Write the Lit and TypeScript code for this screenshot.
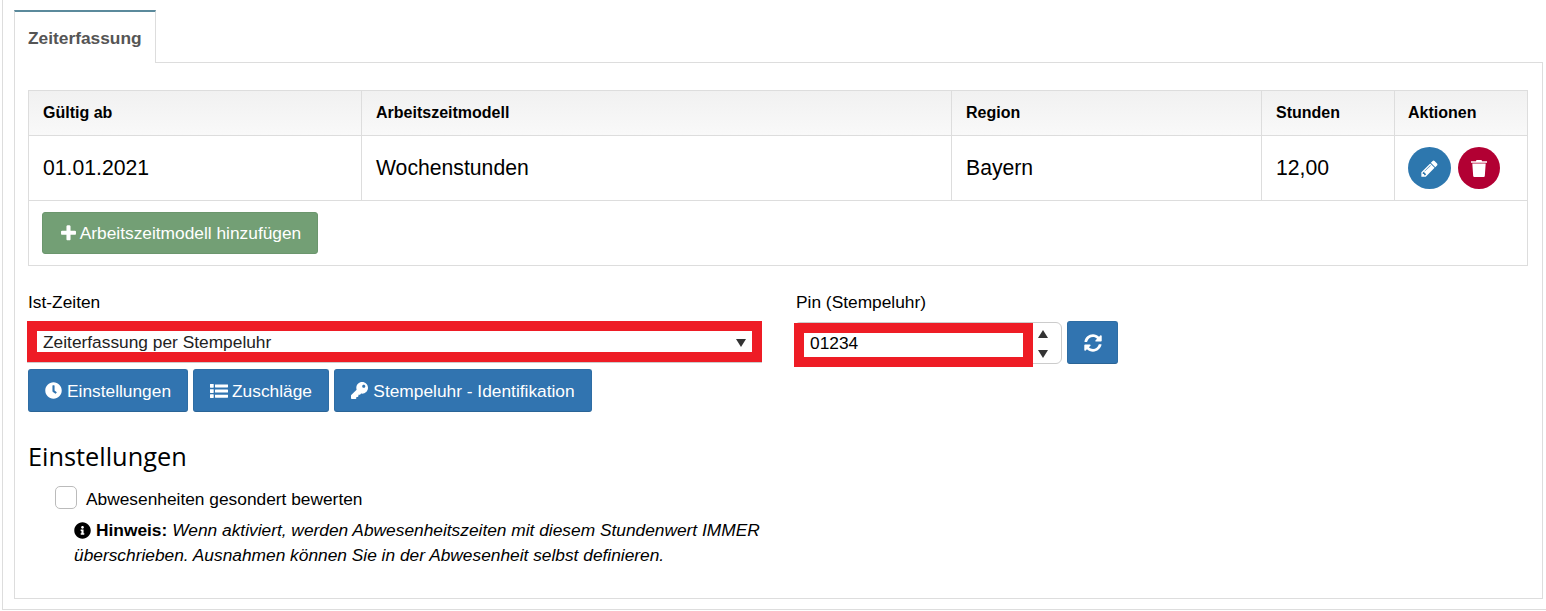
import { LitElement, html, css, svg } from "lit";
import { customElement } from "lit/decorators.js";

const icon = (vb: string, d: string) => html`<svg viewBox=${vb} fill="currentColor" aria-hidden="true">${svg`<path d=${d}></path>`}</svg>`;
const I = {
  pencil: icon("0 0 1792 1792", "M491 1536l91-91-235-235-91 91v107h128v128h107zm523-928q0-22-22-22-10 0-17 7l-542 542q-7 7-7 17 0 22 22 22 10 0 17-7l542-542q7-7 7-17zm-54-192l416 416-832 832h-416v-416zm683 96q0 53-37 90l-166 166-416-416 166-165q36-38 90-38 53 0 91 38l235 234q37 39 37 91z"),
  plus: icon("0 0 1792 1792", "M1600 736v192q0 40-28 68t-68 28h-416v416q0 40-28 68t-68 28h-192q-40 0-68-28t-28-68v-416h-416q-40 0-68-28t-28-68v-192q0-40 28-68t68-28h416v-416q0-40 28-68t68-28h192q40 0 68 28t28 68v416h416q40 0 68 28t28 68z"),
  clock: icon("0 0 512 512", "M256,8C119,8,8,119,8,256S119,504,256,504,504,393,504,256,393,8,256,8Zm92.49,313h0l-20,25a16,16,0,0,1-22.49,2.5h0l-67-49.72a40,40,0,0,1-15-31.23V112a16,16,0,0,1,16-16h32a16,16,0,0,1,16,16V256l58,42.5A16,16,0,0,1,348.49,321Z"),
  list: icon("0 0 18 14", "M.4 0h2.9c.2 0 .4.2.4.4v2.9c0 .2-.2.4-.4.4H.4C.2 3.7 0 3.5 0 3.3V.4C0 .2.2 0 .4 0zM5.4.4h12.2c.2 0 .4.2.4.4v2.2c0 .2-.2.4-.4.4H5.4c-.2 0-.4-.2-.4-.4V.8c0-.2.2-.4.4-.4zM.4 5.2h2.9c.2 0 .4.2.4.4v2.9c0 .2-.2.4-.4.4H.4C.2 8.9 0 8.7 0 8.5V5.6c0-.2.2-.4.4-.4zM5.4 5.6h12.2c.2 0 .4.2.4.4v2.2c0 .2-.2.4-.4.4H5.4c-.2 0-.4-.2-.4-.4V6c0-.2.2-.4.4-.4zM.4 10.3h2.9c.2 0 .4.2.4.4v2.9c0 .2-.2.4-.4.4H.4c-.2 0-.4-.2-.4-.4v-2.9c0-.2.2-.4.4-.4zM5.4 10.7h12.2c.2 0 .4.2.4.4v2.2c0 .2-.2.4-.4.4H5.4c-.2 0-.4-.2-.4-.4v-2.2c0-.2.2-.4.4-.4z"),
  key: icon("0 0 512 512", "M512 176.001C512 273.203 433.202 352 336 352c-11.22 0-22.19-1.062-32.827-3.069l-24.012 27.014A23.999 23.999 0 0 1 261.223 384H224v40c0 13.255-10.745 24-24 24h-40v40c0 13.255-10.745 24-24 24H24c-13.255 0-24-10.745-24-24v-78.059c0-6.365 2.529-12.47 7.029-16.971l161.802-161.802C163.108 213.814 160 195.271 160 176 160 78.798 238.797.001 335.999 0 433.488-.001 512 78.511 512 176.001zM336 128c0 26.51 21.49 48 48 48s48-21.49 48-48-21.49-48-48-48-48 21.49-48 48z"),
  sync: icon("0 0 512 512", "M370.72 133.28C339.458 104.008 298.888 87.962 255.848 88c-77.458.068-144.328 53.178-162.791 126.85-1.344 5.363-6.122 9.15-11.651 9.15H24.103c-7.498 0-13.194-6.807-11.807-14.176C33.933 94.924 134.813 8 256 8c66.448 0 126.791 26.136 171.315 68.685L463.03 40.97C478.149 25.851 504 36.559 504 57.941V192c0 13.255-10.745 24-24 24H345.941c-21.382 0-32.09-25.851-16.971-40.971l41.75-41.749zM32 296h134.059c21.382 0 32.09 25.851 16.971 40.971l-41.75 41.75c31.262 29.273 71.835 45.319 114.876 45.28 77.418-.07 144.315-53.144 162.787-126.849 1.344-5.363 6.122-9.15 11.651-9.15h57.304c7.498 0 13.194 6.807 11.807 14.176C478.067 417.076 377.187 504 256 504c-66.448 0-126.791-26.136-171.315-68.685L48.97 471.03C33.851 486.149 8 475.441 8 454.059V320c0-13.255 10.745-24 24-24z"),
  info: icon("0 0 512 512", "M256 8C119.043 8 8 119.083 8 256c0 136.997 111.043 248 248 248s248-111.003 248-248C504 119.083 392.957 8 256 8zm0 110c23.196 0 42 18.804 42 42s-18.804 42-42 42-42-18.804-42-42 18.804-42 42-42zm56 254c0 6.627-5.373 12-12 12h-88c-6.627 0-12-5.373-12-12v-24c0-6.627 5.373-12 12-12h12v-64h-12c-6.627 0-12-5.373-12-12v-24c0-6.627 5.373-12 12-12h64c6.627 0 12 5.373 12 12v100h12c6.627 0 12 5.373 12 12v24z"),
  trash: icon("0 0 16 17", "M5.5 0h5l.6 1.2H16v1.5H0V1.2h4.9zM1.3 3.6h13.4l-.9 12.4a1.1 1.1 0 0 1-1.1 1H3.3a1.1 1.1 0 0 1-1.1-1z"),
};

@customElement("app-root")
export class AppRoot extends LitElement {
  static styles = css`
    :host { display: block; width: 1546px; height: 611px; box-sizing: border-box; overflow: hidden; background: #fff;
      font-family: "Liberation Sans", Arial, sans-serif; color: #000; font-size: 17.33px; }
    * { box-sizing: border-box; }
    svg { display: block; }
    .outer { margin-left: 2px; height: 610px; border-left: 1px solid #ddd; border-bottom: 1px solid #ddd; padding: 10px 0 10px 11px; display: flex; flex-direction: column; }
    .tabs { display: flex; height: 53px; flex: none; margin-bottom: -1px; position: relative; z-index: 1; }
    .tab { width: 142px; height: 53px; border: 1px solid #ddd; border-top: 2px solid #5b8a9c; border-bottom: 0; background: #fff;
      font-size: 17.33px; font-weight: 700; color: #555; padding: 16px 0 0 13px; line-height: 20px; }
    .panel { width: 1529px; height: 537px; flex: none; border: 1px solid #ddd; padding: 27px 15px 0 13px; }
    .table { border: 1px solid #ddd; width: 1500px; }
    .row { display: grid; grid-template-columns: 332px 590px 310px 133px 1fr; }
    .cell { padding: 0 0 0 14px; border-left: 1px solid #ddd; display: flex; align-items: center; }
    .cell:first-child { border-left: 0; }
    .head { height: 45px; background: linear-gradient(#f1f1f1, #f9f9f9); border-bottom: 1px solid #ddd; font-size: 16px; font-weight: 700; }
    .head .cell:last-child { padding-left: 13px; }
    .body { height: 65px; border-bottom: 1px solid #ddd; font-size: 21.2px; }
    .foot { height: 64px; padding: 11px 13px; }
    .cell.actions { gap: 7px; padding-left: 13px; }
    .round { width: 43px; height: 42px; border-radius: 50%; background: #2d77ae; color: #fff; display: flex; align-items: center; justify-content: center; }
    .round svg { width: 19px; height: 19px; }
    .round.del { width: 42px; background: #b20033; }
    .round.del svg { width: 16px; height: 17px; }
    .btn { display: inline-flex; align-items: center; justify-content: center; gap: 5px; height: 43px; border-radius: 3px; color: #fff; background: #3174b0;
      border: 1px solid #2e6da4; border-bottom-color: #2a6496; font-size: 17.33px; white-space: nowrap; }
    .btn svg { width: 17px; height: 17px; flex: none; }
    .btn span { padding-top: 2px; }
    .btn.green { background: #739f75; border-color: #6b966d; height: 42px; width: 276px; gap: 2px; }
    .btn.green svg { width: 19px; height: 19px; }
    .btn.green span { padding-top: 0; }
    .btn.einst { width: 160px; }
    .btn.zus { width: 136px; gap: 4px; }
    .btn.zus svg { width: 18px; height: 14px; }
    .btn.stamp { width: 258px; }
    .form { display: flex; margin-top: 26px; }
    .left { width: 766px; flex: none; }
    label.cap { display: block; font-size: 17.33px; line-height: 20px; height: 20px; }
    label.cap.pinlabel { margin-left: 2px; }
    .anno { border: 10px solid #ee1c25; background: #fff; }
    .select { width: 735px; height: 41px; margin: 9px 0 0 -1px; display: flex; align-items: center; justify-content: space-between; padding: 0 3px 0 6px; font-size: 17.33px; box-shadow: 0 1px 0 #ccc; color: #222; }
    .select span:first-child { padding-top: 2px; }
    .arrow { width: 0; height: 0; border-left: 5.5px solid transparent; border-right: 5.5px solid transparent; border-top: 8px solid #333; margin-right: 3px; margin-top: 2px; }
    .buttons { display: flex; gap: 5px; margin-top: 7px; }
    .pin { display: flex; gap: 5px; margin-top: 9px; }
    .number { position: relative; width: 268px; height: 42px; border: 1px solid #ccc; border-radius: 6px; margin-top: 1px; }
    .number .anno { position: absolute; left: -1px; top: 0; width: 239px; height: 44px; font-size: 17.33px; padding: 0 0 4px 6px; display: flex; align-items: center; }
    .spin { position: absolute; right: 13px; top: 7px; height: 28px; display: flex; flex-direction: column; justify-content: space-between; align-items: center; }
    .up { width: 0; height: 0; border-left: 5.5px solid transparent; border-right: 5.5px solid transparent; border-bottom: 8px solid #333; }
    .down { width: 0; height: 0; border-left: 5.5px solid transparent; border-right: 5.5px solid transparent; border-top: 8px solid #333; }
    .refresh { width: 51px; }
    .refresh svg { width: 18px; height: 18px; }
    h2 { font: 400 25.33px/32px "Open Sans", sans-serif; margin: 28px 0 0; }
    .settings { padding-left: 27px; }
    .check { display: flex; align-items: flex-start; gap: 9px; margin-top: 14px; font-size: 17.33px; }
    .check span:last-child { padding-top: 2px; line-height: 23px; }
    .box { width: 22px; height: 23px; border: 1px solid #bbb; border-radius: 5px; background: #fff; }
    .hint { margin: 7px 0 0 19px; font-size: 17.33px; line-height: 25px; font-style: italic; white-space: nowrap; }
    .hint b { font-style: normal; }
    .hint .first { display: flex; align-items: center; gap: 5px; }
    .hint svg { width: 17px; height: 17px; }
  `;

  render() {
    return html`<div class="outer">
      <div class="tabs"><div class="tab">Zeiterfassung</div></div>
      <div class="panel">
        <div class="table">
          <div class="row head">
            <div class="cell">Gültig ab</div><div class="cell">Arbeitszeitmodell</div><div class="cell">Region</div><div class="cell">Stunden</div><div class="cell">Aktionen</div>
          </div>
          <div class="row body">
            <div class="cell">01.01.2021</div><div class="cell">Wochenstunden</div><div class="cell">Bayern</div><div class="cell">12,00</div>
            <div class="cell actions"><span class="round">${I.pencil}</span><span class="round del">${I.trash}</span></div>
          </div>
          <div class="foot"><span class="btn green">${I.plus}<span>Arbeitszeitmodell hinzufügen</span></span></div>
        </div>
        <div class="form">
          <div class="left">
            <label class="cap">Ist-Zeiten</label>
            <div class="anno select"><span>Zeiterfassung per Stempeluhr</span><span class="arrow"></span></div>
            <div class="buttons">
              <span class="btn einst">${I.clock}<span>Einstellungen</span></span>
              <span class="btn zus">${I.list}<span>Zuschläge</span></span>
              <span class="btn stamp">${I.key}<span>Stempeluhr - Identifikation</span></span>
            </div>
          </div>
          <div>
            <label class="cap pinlabel">Pin (Stempeluhr)</label>
            <div class="pin">
              <div class="number"><div class="anno">01234</div><div class="spin"><span class="up"></span><span class="down"></span></div></div>
              <span class="btn refresh">${I.sync}</span>
            </div>
          </div>
        </div>
        <h2>Einstellungen</h2>
        <div class="settings">
          <div class="check"><span class="box"></span><span>Abwesenheiten gesondert bewerten</span></div>
          <div class="hint">
            <div class="first">${I.info}<b>Hinweis:</b><span>Wenn aktiviert, werden Abwesenheitszeiten mit diesem Stundenwert IMMER</span></div>
            <div>überschrieben. Ausnahmen können Sie in der Abwesenheit selbst definieren.</div>
          </div>
        </div>
      </div>
    </div>`;
  }
}
